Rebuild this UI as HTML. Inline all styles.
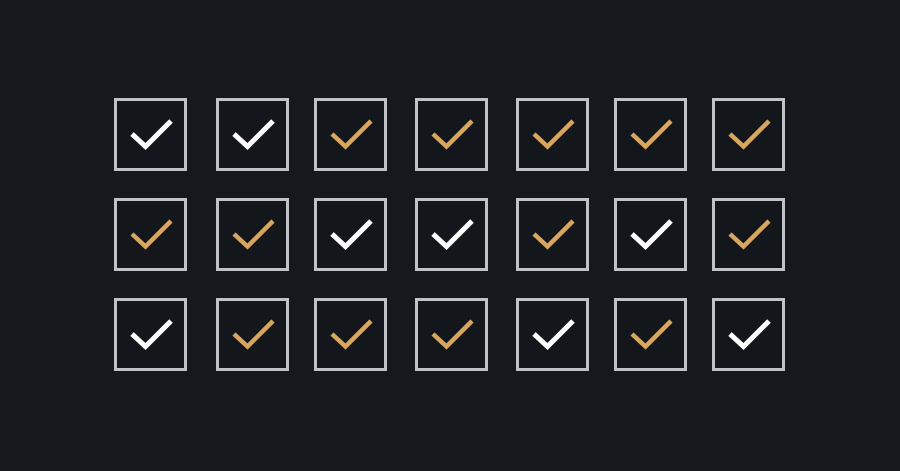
<!DOCTYPE html>
<html><head><meta charset="utf-8"><style>
html,body{margin:0;padding:0;background:#15191e;width:900px;height:471px;overflow:hidden}
</style></head><body>
<svg width="900" height="471" viewBox="0 0 900 471" xmlns="http://www.w3.org/2000/svg">
<rect width="900" height="471" fill="#15191e"/>
<defs>
<g id="box"><rect x="1.5" y="1.5" width="70" height="70" fill="#13161b" stroke="#bfc3c7" stroke-width="3"/></g>
<path id="ck" d="M18 36 L31.5 48.5 L57 23" fill="none" stroke-linecap="butt" stroke-linejoin="miter"/>
</defs>
<g id="grid"></g>
<!-- Row 1 -->
<g transform="translate(114,98)"><use href="#box"/><use href="#ck" stroke="#fff" stroke-width="5"/></g>
<g transform="translate(216,98)"><use href="#box"/><use href="#ck" stroke="#fff" stroke-width="5"/></g>
<g transform="translate(314,98)"><use href="#box"/><use href="#ck" stroke="#d8a65d" stroke-width="4.5"/></g>
<g transform="translate(415,98)"><use href="#box"/><use href="#ck" stroke="#d8a65d" stroke-width="4.5"/></g>
<g transform="translate(516,98)"><use href="#box"/><use href="#ck" stroke="#d8a65d" stroke-width="4.5"/></g>
<g transform="translate(614,98)"><use href="#box"/><use href="#ck" stroke="#d8a65d" stroke-width="4.5"/></g>
<g transform="translate(712,98)"><use href="#box"/><use href="#ck" stroke="#d8a65d" stroke-width="4.5"/></g>
<!-- Row 2 -->
<g transform="translate(114,198)"><use href="#box"/><use href="#ck" stroke="#d8a65d" stroke-width="4.5"/></g>
<g transform="translate(216,198)"><use href="#box"/><use href="#ck" stroke="#d8a65d" stroke-width="4.5"/></g>
<g transform="translate(314,198)"><use href="#box"/><use href="#ck" stroke="#fff" stroke-width="5"/></g>
<g transform="translate(415,198)"><use href="#box"/><use href="#ck" stroke="#fff" stroke-width="5"/></g>
<g transform="translate(516,198)"><use href="#box"/><use href="#ck" stroke="#d8a65d" stroke-width="4.5"/></g>
<g transform="translate(614,198)"><use href="#box"/><use href="#ck" stroke="#fff" stroke-width="5"/></g>
<g transform="translate(712,198)"><use href="#box"/><use href="#ck" stroke="#d8a65d" stroke-width="4.5"/></g>
<!-- Row 3 -->
<g transform="translate(114,298)"><use href="#box"/><use href="#ck" stroke="#fff" stroke-width="5"/></g>
<g transform="translate(216,298)"><use href="#box"/><use href="#ck" stroke="#d8a65d" stroke-width="4.5"/></g>
<g transform="translate(314,298)"><use href="#box"/><use href="#ck" stroke="#d8a65d" stroke-width="4.5"/></g>
<g transform="translate(415,298)"><use href="#box"/><use href="#ck" stroke="#d8a65d" stroke-width="4.5"/></g>
<g transform="translate(516,298)"><use href="#box"/><use href="#ck" stroke="#fff" stroke-width="5"/></g>
<g transform="translate(614,298)"><use href="#box"/><use href="#ck" stroke="#d8a65d" stroke-width="4.5"/></g>
<g transform="translate(712,298)"><use href="#box"/><use href="#ck" stroke="#fff" stroke-width="5"/></g>
</svg>
</body></html>
